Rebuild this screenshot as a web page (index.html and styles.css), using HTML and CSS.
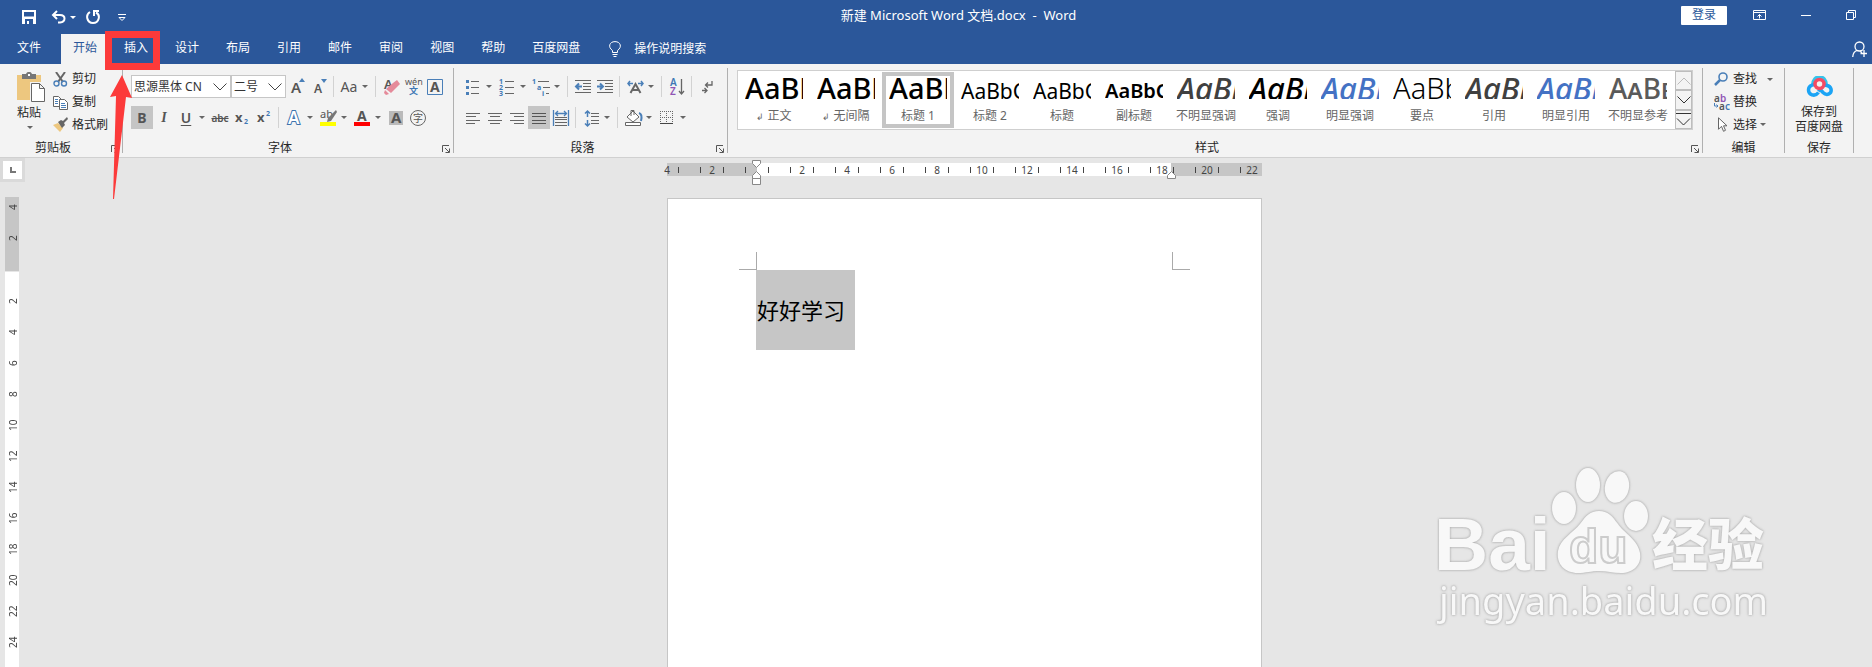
FILE: index.html
```html
<!DOCTYPE html>
<html lang="zh-CN">
    <head>
        <meta charset="utf-8">
        <title>新建 Microsoft Word 文档.docx - Word</title>
        <link rel="stylesheet" href="styles.css">
    </head>
    <body>
        <!-- Title bar -->
        <header class="titlebar">
            <div class="quick">
                <button class="quick_btn" aria-label="保存">
                    <svg width="14" height="14" viewBox="0 0 14 14"><path d="M0 0h14v14H0zM2 2v4.500h10V2zM3 9v5h8V9z" fill="#fff" fill-rule="evenodd"/><path d="M5 11h2v3H5z" fill="#fff"/></svg>
                </button>
                <button class="quick_btn undo" aria-label="撤销">
                    <svg width="15" height="14" viewBox="0 0 15 14" fill="none" stroke="#fff" stroke-width="2"><path d="M6 1L2 5l4 4M2 5h7c6 0 6 7 0 7.500H7"/></svg>
                    <i class="caret white"></i>
                </button>
                <button class="quick_btn redo" aria-label="重复">
                    <svg width="14" height="14" viewBox="0 0 14 14" fill="none" stroke="#fff" stroke-width="2"><path d="M4 2C-1 5 1 13 7 13s8-8 3-10.500M8 6V1h5"/></svg>
                </button>
                <button class="quick_btn more" aria-label="自定义快速访问工具栏">
                    <svg width="8" height="7" viewBox="0 0 8 7" fill="none" stroke="#fff"><path d="M0 .5h8M1 3.500h6L4 6.500z"/></svg>
                </button>
            </div>
            <div class="doc_title">新建 Microsoft Word 文档.docx&nbsp; - &nbsp;Word</div>
            <div class="window_tools">
                <button class="login">登录</button>
                <button class="win_btn" aria-label="功能区显示选项">
                    <svg width="13" height="10" viewBox="0 0 13 10" fill="none" stroke="#fff"><path d="M.5.5h12v9H.5zM0 2.500h13M6.500 8.500v-4M4.500 6.500l2-2 2 2"/></svg>
                </button>
                <button class="win_btn" aria-label="最小化">
                    <svg width="10" height="10" viewBox="0 0 10 10" stroke="#fff"><path d="M0 5.500h10"/></svg>
                </button>
                <button class="win_btn" aria-label="还原">
                    <svg width="10" height="10" viewBox="0 0 10 10" fill="none" stroke="#fff"><path d="M.5 2.500h7v7h-7zM2.500 2.500v-2h7v7h-2"/></svg>
                </button>
            </div>
        </header>

        <!-- Tabs -->
        <nav class="tabs">
            <button class="tab file">文件</button>
            <button class="tab active">开始</button>
            <button class="tab">插入</button>
            <button class="tab">设计</button>
            <button class="tab">布局</button>
            <button class="tab">引用</button>
            <button class="tab">邮件</button>
            <button class="tab">审阅</button>
            <button class="tab">视图</button>
            <button class="tab">帮助</button>
            <button class="tab">百度网盘</button>
            <button class="tab tell_me">
                <svg width="12" height="16" viewBox="0 0 12 16" fill="none" stroke="#fff"><path d="M3.500 11.500v-2C-1.500 6 .5.600 6 .600S13.500 6 8.500 9.500v2zM3.500 13.500h5M4.500 15.500h3"/></svg>
                操作说明搜索
            </button>
            <button class="share" aria-label="共享">
                <svg width="16" height="17" viewBox="0 0 16 17" fill="none" stroke="#fff" stroke-width="1.300"><circle cx="7.500" cy="5.500" r="4.500"/><path d="M.7 16c.3-4 2-6 4.500-6.700M8 10.500l2 1M12 9v7M8.500 12.500H15"/></svg>
            </button>
        </nav>

        <!-- Ribbon -->
        <section class="ribbon">
            <div class="group clipboard">
                <div class="group_body">
                    <button class="paste">
                        <svg width="28" height="31" viewBox="0 0 28 31"><path d="M0 3h24v25H0z" fill="#edc77f"/><path d="M5 2h4c1-3 5-3 6 0h4v5H5z" fill="#767676"/><path d="M11 2h2v2h-2z" fill="#fff"/><path d="M13 10h16v21H13z" fill="#f3f3f3"/><path d="M14.500 11.500h8l5 5v13h-13zM22.500 11.500v5h5" fill="#fff" stroke="#666"/></svg>
                        <span>粘贴</span>
                        <i class="caret"></i>
                    </button>
                    <div class="stack">
                        <button class="small_btn">
                            <svg width="15" height="15" viewBox="0 0 15 15" fill="none"><path d="M3 0l7 10M12 0L5 10" stroke="#666" stroke-width="2"/><circle cx="3.500" cy="11.500" r="2.500" stroke="#4a7fb8" stroke-width="1.400"/><circle cx="11" cy="11.500" r="2.500" stroke="#4a7fb8" stroke-width="1.400"/></svg>
                            剪切
                        </button>
                        <button class="small_btn">
                            <svg width="15" height="15" viewBox="0 0 15 15" fill="#fff" stroke="#666"><path d="M.5 1.500h5l3 3v7h-8z"/><path d="M2 4.500h3M2 6.500h3M2 8.500h3" stroke="#4a7fb8"/><path d="M6.500 4.500h5l3 3v7h-8z"/><path d="M8 8.500h4M8 10.500h5M8 12.500h5" stroke="#4a7fb8"/></svg>
                            复制
                        </button>
                        <button class="small_btn">
                            <svg width="15" height="15" viewBox="0 0 15 15"><path d="M0 8l5-2 5 5-3 4z" fill="#edc77f"/><path d="M5 5l3-2 2 1 4-4 1 2-4 4 1 2-3 3z" fill="#666"/></svg>
                            格式刷
                        </button>
                    </div>
                </div>
                <div class="group_foot"><span>剪贴板</span><button class="launcher" aria-label="剪贴板选项"><svg width="8" height="8" viewBox="0 0 8 8" fill="none" stroke="#555"><path d="M.5 7V.5H7M3 3l4 4M7.500 3.500v4h-4"/></svg></button></div>
            </div>

            <div class="group font">
                <div class="group_body rows">
                    <div class="tool_row">
                        <div class="combo family">
                            <select aria-label="字体"><option>思源黑体 CN</option></select>
                            <svg width="14" height="8" viewBox="0 0 14 8" fill="none" stroke="#444"><path d="M.5.5L7 7 13.500.5"/></svg>
                        </div>
                        <div class="combo size">
                            <select aria-label="字号"><option>二号</option></select>
                            <svg width="14" height="8" viewBox="0 0 14 8" fill="none" stroke="#444"><path d="M.5.5L7 7 13.500.5"/></svg>
                        </div>
                        <button class="tool" aria-label="增大字号"><svg width="22" height="22" viewBox="0 0 22 22"><text x="5" y="17" font-size="15" class="glyph semi">A</text><path d="M13 6l3-4 3 4z" fill="#4a7fb8"/></svg></button>
                        <button class="tool" aria-label="减小字号"><svg width="22" height="22" viewBox="0 0 22 22"><text x="6" y="17" font-size="12" class="glyph semi">A</text><path d="M13 3h6l-3 4z" fill="#4a7fb8"/></svg></button>
                        <i class="sep"></i>
                        <button class="tool" aria-label="更改大小写"><span class="aa">Aa</span></button><i class="drop"></i>
                        <i class="sep"></i>
                        <button class="tool" aria-label="清除所有格式"><svg width="22" height="22" viewBox="0 0 22 22"><text x="4" y="13" font-size="13" class="glyph semi">A</text><path d="M13 7l4-3 3 4-9 9-5-4z" fill="#e58a9a"/><path d="M5 14l4 4-3 1-2-2z" fill="#e58a9a"/></svg></button>
                        <button class="tool" aria-label="拼音指南"><svg width="22" height="22" viewBox="0 0 22 22"><text x="3" y="9" font-size="9" class="glyph plain">wén</text><text x="7" y="18" font-size="9" class="glyph blue">文</text></svg></button>
                        <button class="tool" aria-label="字符边框"><svg width="22" height="22" viewBox="0 0 22 22"><path d="M3.500 3.500h15v15h-15z" fill="none" stroke="#4a7fb8"/><text x="6" y="16" font-size="14" class="glyph">A</text></svg></button>
                    </div>
                    <div class="tool_row">
                        <button class="tool on bold" aria-label="加粗">B</button>
                        <button class="tool italic" aria-label="倾斜">I</button>
                        <button class="tool under" aria-label="下划线">U</button><i class="drop"></i>
                        <button class="tool strike" aria-label="删除线">abc</button>
                        <button class="tool" aria-label="下标"><svg width="22" height="22" viewBox="0 0 22 22"><text x="4" y="15" font-size="13" class="glyph">x</text><text x="13" y="17" font-size="7" class="glyph blue">2</text></svg></button>
                        <button class="tool" aria-label="上标"><svg width="22" height="22" viewBox="0 0 22 22"><text x="4" y="15" font-size="13" class="glyph">x</text><text x="13" y="9" font-size="7" class="glyph blue">2</text></svg></button>
                        <i class="sep"></i>
                        <button class="tool" aria-label="文本效果"><svg width="22" height="22" viewBox="0 0 22 22"><text x="5" y="17" font-size="17" fill="#fff" stroke="#3f74ae" stroke-width="2" class="outline">A</text></svg></button><i class="drop"></i>
                        <button class="tool" aria-label="突出显示"><svg width="22" height="22" viewBox="0 0 22 22"><text x="3" y="11" font-size="11" class="glyph plain">ab</text><path d="M19 3l-8 8-1 4 4-1 6-9z" fill="#777"/><path d="M3 15h16v4H3z" fill="#ff0"/></svg></button><i class="drop"></i>
                        <button class="tool" aria-label="字体颜色"><svg width="22" height="22" viewBox="0 0 22 22"><text x="6" y="14" font-size="14" class="glyph">A</text><path d="M3 15h16v4H3z" fill="#f00"/></svg></button><i class="drop"></i>
                        <button class="tool" aria-label="字符底纹"><svg width="22" height="22" viewBox="0 0 22 22"><path d="M4 4h14v14H4z" fill="#bababa"/><text x="6" y="16" font-size="15" class="glyph">A</text></svg></button>
                        <button class="tool" aria-label="带圈字符"><svg width="22" height="22" viewBox="0 0 22 22"><circle cx="11" cy="11" r="7.500" fill="none" stroke="#666"/><text x="6" y="15" font-size="10" class="glyph plain">字</text></svg></button>
                    </div>
                </div>
                <div class="group_foot"><span>字体</span><button class="launcher" aria-label="字体选项"><svg width="8" height="8" viewBox="0 0 8 8" fill="none" stroke="#555"><path d="M.5 7V.5H7M3 3l4 4M7.500 3.500v4h-4"/></svg></button></div>
            </div>

            <div class="group paragraph">
                <div class="group_body rows">
                    <div class="tool_row">
                        <button class="tool" aria-label="项目符号"><svg width="22" height="22" viewBox="0 0 22 22"><path d="M9 5.500h8M9 11.500h8M9 17.500h8" stroke="#666"/><path d="M4 4h3v3H4zM4 10h3v3H4zM4 16h3v3H4z" fill="#4a7fb8"/></svg></button><i class="drop"></i>
                        <button class="tool" aria-label="编号"><svg width="22" height="22" viewBox="0 0 22 22"><path d="M9 5.500h9M9 11.500h9M9 17.500h9" stroke="#666"/><text x="3" y="8" font-size="7" class="glyph blue">1</text><text x="3" y="14" font-size="7" class="glyph blue">2</text><text x="3" y="20" font-size="7" class="glyph blue">3</text></svg></button><i class="drop"></i>
                        <button class="tool" aria-label="多级列表"><svg width="22" height="22" viewBox="0 0 22 22"><path d="M8 5.500h11M13 11.500h7M16 17.500h3" stroke="#666"/><text x="2" y="8" font-size="7" class="glyph blue">1</text><text x="7" y="14" font-size="7" class="glyph blue">a</text><text x="12" y="20" font-size="7" class="glyph blue">i</text></svg></button><i class="drop"></i>
                        <i class="sep"></i>
                        <button class="tool" aria-label="减少缩进量"><svg width="22" height="22" viewBox="0 0 22 22" fill="none" stroke="#666"><path d="M3 4.500h16M11 7.500h8M11 10.500h8M11 13.500h8M3 16.500h16"/><path d="M10 10.500H4M7 7.500l-3 3 3 3" stroke="#4a7fb8" stroke-width="2"/></svg></button>
                        <button class="tool" aria-label="增加缩进量"><svg width="22" height="22" viewBox="0 0 22 22" fill="none" stroke="#666"><path d="M3 4.500h16M11 7.500h8M11 10.500h8M11 13.500h8M3 16.500h16"/><path d="M3 10.500h6M6 7.500l3 3-3 3" stroke="#4a7fb8" stroke-width="2"/></svg></button>
                        <i class="sep"></i>
                        <button class="tool" aria-label="中文版式"><svg width="22" height="22" viewBox="0 0 22 22" fill="none"><path d="M6.500 17L11.500 8l5 9M8 14h7" stroke="#666" stroke-width="2"/><path d="M9 7.500H4M6 5L4 7.500 6 10M14 7.500h5M17 5l2 2.500-2 2.500" stroke="#4a7fb8" stroke-width="1.500"/></svg></button><i class="drop"></i>
                        <i class="sep"></i>
                        <button class="tool" aria-label="排序"><svg width="22" height="22" viewBox="0 0 22 22"><text x="4" y="10" font-size="10" class="glyph blue semi">A</text><text x="4" y="19" font-size="10" class="glyph purple semi">Z</text><path d="M15.500 3v14M13 15l2.500 3 2.500-3" fill="none" stroke="#666" stroke-width="1.300"/></svg></button>
                        <i class="sep"></i>
                        <button class="tool" aria-label="显示编辑标记"><svg width="22" height="22" viewBox="0 0 22 22" fill="none" stroke="#666" stroke-width="1.300"><path d="M16 5v4h-6M12 6.500L9.500 9l2.500 2.500M6 14.500h5M8.500 12l2.500 2.500L8.500 17"/></svg></button>
                    </div>
                    <div class="tool_row">
                        <button class="tool" aria-label="左对齐"><svg width="22" height="22" viewBox="0 0 22 22" stroke="#666"><path d="M4 6.500h14M4 9.500h10M4 13.500h14M4 16.500h9"/></svg></button>
                        <button class="tool" aria-label="居中"><svg width="22" height="22" viewBox="0 0 22 22" stroke="#666"><path d="M4 6.500h14M6 9.500h10M4 13.500h14M6 16.500h10"/></svg></button>
                        <button class="tool" aria-label="右对齐"><svg width="22" height="22" viewBox="0 0 22 22" stroke="#666"><path d="M4 6.500h14M8 9.500h10M4 13.500h14M8 16.500h10"/></svg></button>
                        <button class="tool on" aria-label="两端对齐"><svg width="22" height="22" viewBox="0 0 22 22" stroke="#555"><path d="M4 6.500h14M4 9.500h14M4 13.500h14M4 16.500h14"/></svg></button>
                        <button class="tool" aria-label="分散对齐"><svg width="22" height="22" viewBox="0 0 22 22" fill="none" stroke="#666"><path d="M5 10.500h12M5 12.500h12M5 15.500h12M5 18.500h12"/><path d="M3.500 3v16M18.500 3v16M5 6.500h12M8 4L5.500 6.500 8 9M14 4l2.500 2.500L14 9" stroke="#4a7fb8" stroke-width="1.300"/></svg></button>
                        <i class="sep"></i>
                        <button class="tool" aria-label="行和段落间距"><svg width="22" height="22" viewBox="0 0 22 22" fill="none" stroke="#666"><path d="M11 6.500h8M11 9.500h8M11 13.500h8M11 16.500h8"/><path d="M7.500 4v6M5 6.500L7.500 4 10 6.500M7.500 13v6M5 16.500L7.500 19l2.500-2.500" stroke="#4a7fb8" stroke-width="1.500"/></svg></button><i class="drop"></i>
                        <i class="sep"></i>
                        <button class="tool" aria-label="底纹"><svg width="22" height="22" viewBox="0 0 22 22" fill="none" stroke="#666"><path d="M5 10l6-6 6 6-6 5zM9 9V3.500h3V8" fill="#fff"/><path d="M17 6c3 1 3 4 2 8" stroke="#4a7fb8" stroke-width="2"/><path d="M3.500 15.500h15v3h-15z" fill="#fff"/></svg></button><i class="drop"></i>
                        <button class="tool" aria-label="边框"><svg width="22" height="22" viewBox="0 0 22 22" fill="none" stroke="#666"><path d="M4.500 4v12M10.500 4v12M16.500 4v12M4 4.500h13M4 10.500h13" stroke-dasharray="1 1"/><path d="M4 16.500h13" stroke="#444"/></svg></button><i class="drop"></i>
                    </div>
                </div>
                <div class="group_foot"><span>段落</span><button class="launcher" aria-label="段落选项"><svg width="8" height="8" viewBox="0 0 8 8" fill="none" stroke="#555"><path d="M.5 7V.5H7M3 3l4 4M7.500 3.500v4h-4"/></svg></button></div>
            </div>

            <div class="group styles">
                <div class="group_body">
                    <div class="gallery">
                        <button class="style"><span class="sample">AaBb</span><span class="style_name"><small>↲</small> 正文</span></button>
                        <button class="style"><span class="sample">AaBb</span><span class="style_name"><small>↲</small> 无间隔</span></button>
                        <button class="style selected"><span class="sample">AaBb</span><span class="style_name">标题 1</span></button>
                        <button class="style"><span class="sample mid">AaBbC</span><span class="style_name">标题 2</span></button>
                        <button class="style"><span class="sample mid">AaBbC</span><span class="style_name">标题</span></button>
                        <button class="style"><span class="sample mid strong">AaBbC</span><span class="style_name">副标题</span></button>
                        <button class="style"><span class="sample slant dim">AaBb</span><span class="style_name">不明显强调</span></button>
                        <button class="style"><span class="sample slant">AaBb</span><span class="style_name">强调</span></button>
                        <button class="style"><span class="sample slant accent">AaBb</span><span class="style_name">明显强调</span></button>
                        <button class="style"><span class="sample thin">AaBb</span><span class="style_name">要点</span></button>
                        <button class="style"><span class="sample slant dim">AaBb</span><span class="style_name">引用</span></button>
                        <button class="style"><span class="sample slant accent">AaBb</span><span class="style_name">明显引用</span></button>
                        <button class="style"><span class="sample caps">AaBb</span><span class="style_name">不明显参考</span></button>
                        <div class="gallery_nav">
                            <button class="nav_btn" aria-label="上一行"><svg width="14" height="8" viewBox="0 0 14 8" fill="none" stroke="#bbb"><path d="M.5 7.500L7 1l6.500 6.500"/></svg></button>
                            <button class="nav_btn" aria-label="下一行"><svg width="14" height="8" viewBox="0 0 14 8" fill="none" stroke="#333"><path d="M.5.5L7 7 13.500.5"/></svg></button>
                            <button class="nav_btn" aria-label="其他"><svg width="15" height="13" viewBox="0 0 15 13" fill="none" stroke="#333"><path d="M0 .5h15M1 5.500L7.500 12 14 5.500"/></svg></button>
                        </div>
                    </div>
                </div>
                <div class="group_foot"><span>样式</span><button class="launcher" aria-label="样式选项"><svg width="8" height="8" viewBox="0 0 8 8" fill="none" stroke="#555"><path d="M.5 7V.5H7M3 3l4 4M7.500 3.500v4h-4"/></svg></button></div>
            </div>

            <div class="group editing">
                <div class="group_body">
                    <div class="stack">
                        <button class="small_btn find">
                            <svg width="16" height="15" viewBox="0 0 16 15" fill="none" stroke="#4a7fb8"><circle cx="9" cy="5" r="4" stroke-width="1.600"/><path d="M6 8l-5 5" stroke-width="2.500"/></svg>
                            查找 <i class="caret"></i>
                        </button>
                        <button class="small_btn">
                            <svg width="16" height="17" viewBox="0 0 16 17"><text x="0" y="8" font-size="10" class="glyph semi">a</text><text x="6" y="8" font-size="10" class="glyph purple semi">b</text><text x="5" y="16" font-size="10" class="glyph semi">a</text><text x="11" y="16" font-size="10" class="glyph blue semi">c</text><path d="M.5 9v3h3M2.500 10.500l1.500 1.500-1.500 1.500" fill="none" stroke="#4a7fb8"/></svg>
                            替换
                        </button>
                        <button class="small_btn select">
                            <svg width="16" height="15" viewBox="0 0 16 15"><path d="M4.500.8v11.500l3-3 2 5 2-1-2-4.500h3.500z" fill="#fff" stroke="#666"/></svg>
                            选择 <i class="caret"></i>
                        </button>
                    </div>
                </div>
                <div class="group_foot"><span>编辑</span></div>
            </div>

            <div class="group cloud">
                <div class="group_body">
                    <button class="cloud_btn">
                        <svg width="27" height="22" viewBox="0 0 27 22" fill="none"><path d="M7 9C7-1.500 20-1.500 20 9" stroke="#35c3ea" stroke-width="4"/><path d="M12.500 16.500c-4 5-10 2-10-2.500 0-5 6-7 9.500-3l5 5.500c4 4 9 1 8-3.500-1-4-7-5-9.500-1.500l-3 4" stroke="#1ba4f5" stroke-width="3.500"/><circle cx="13.500" cy="8" r="4.500" fill="#f3f3f3" stroke="#f54b63" stroke-width="3.500"/></svg>
                        <span>保存到<br>百度网盘</span>
                    </button>
                </div>
                <div class="group_foot"><span>保存</span></div>
            </div>
        </section>

        <!-- Document area -->
        <main class="workspace">
            <div class="side">
                <button class="tab_stop" aria-label="制表符"><svg width="6" height="6" viewBox="0 0 6 6"><path d="M0 0h2v4h4v2H0z" fill="#777"/></svg></button>
                <div class="vruler">
                    <div class="vmargin"><span>4</span><span>2</span></div>
                    <div class="vbody">
                        <span>2</span><span>4</span><span>6</span><span>8</span><span>10</span><span>12</span><span>14</span><span>16</span><span>18</span><span>20</span><span>22</span><span>24</span>
                    </div>
                </div>
            </div>
            <div class="canvas">
                <div class="hruler">
                    <div class="marks">
                        <span>4</span><span>2</span><span></span><span>2</span><span>4</span><span>6</span><span>8</span><span>10</span><span>12</span><span>14</span><span>16</span><span>18</span><span>20</span><span>22</span>
                    </div>
                    <svg class="indent left" width="9" height="25" viewBox="0 0 9 25" fill="#fff" stroke="#888"><path d="M.5.5h8v3l-4 4-4-4zM.5 18.500v-3l4-4 4 4v3zM.5 18.500h8v6h-8z"/></svg>
                    <svg class="indent right" width="9" height="8" viewBox="0 0 9 8" fill="#fff" stroke="#888"><path d="M.5 7.500v-3l4-4 4 4v3z"/></svg>
                </div>
                <article class="page">
                    <div class="crops"><i class="crop tl"></i><i class="crop tr"></i></div>
                    <h1 class="heading"><span>好好学习</span></h1>
                </article>
            </div>

            <svg class="watermark" width="344" height="180" viewBox="0 0 344 180" fill="#f8f8f8">
                <text x="2" y="110" class="wm_logo">Bai</text>
                <ellipse cx="132" cy="48" rx="12" ry="16"/>
                <ellipse cx="156" cy="25" rx="12" ry="17"/>
                <ellipse cx="185" cy="27" rx="12" ry="16" transform="rotate(12 185 27)"/>
                <ellipse cx="204" cy="56" rx="12" ry="15"/>
                <path d="M167 51c9 0 13 5 19 13 6 9 20 16 22 29 2 12-7 20-19 20-8 0-14-2-22-2s-13 2-21 2c-13 0-22-9-20-22 2-12 15-18 22-27 6-8 10-13 19-13z"/>
                <text x="137" y="103" class="wm_du">du</text>
                <text x="220" y="105" class="wm_cn">经验</text>
                <text x="7" y="155" class="wm_url">jingyan.baidu.com</text>
            </svg>
        </main>

        <!-- Pointer to the insert tab -->
        <svg class="callout" width="55" height="169" viewBox="0 0 55 169">
            <path d="M0 0h55v39H0zM7 7v25h41V7z" fill="#fc3a3a" fill-rule="evenodd"/>
            <path d="M17 44l10 23-6-1-12 102h-1L11 65l-6 1z" fill="#fc3a3a"/>
        </svg>
    </body>
</html>
```
FILE: styles.css
```css
*{
    box-sizing: border-box;
}
body{
    margin: 0;
    height: 100vh;
    display: flex;
    flex-direction: column;
    position: relative;
    overflow: hidden;
    background: #e6e6e6;
    color: #262626;
    font: 12px/16px "Noto Sans", "Noto Sans CJK SC", sans-serif;
}
button{
    padding: 0;
    border: 0;
    background: none;
    color: inherit;
    font: inherit;
}
svg{
    display: block;
    flex: none;
}

/* Title bar */
.titlebar{
    height: 34px;
    flex: none;
    display: flex;
    align-items: center;
    justify-content: space-between;
    padding: 0 16px 4px 22px;
    background: #2b579a;
    color: #fff;
}
.quick{
    width: 214px;
    display: flex;
    align-items: center;
    padding-top: 4px;
}
.quick_btn{
    display: flex;
    align-items: center;
    gap: 4px;
    margin-right: 15px;
}
.undo{
    margin-right: 10px;
}
.redo{
    margin-right: 18px;
}
.doc_title{
    font-size: 13px;
    white-space: nowrap;
}
.window_tools{
    display: flex;
    align-items: center;
}
.login{
    width: 46px;
    height: 19px;
    margin-right: 26px;
    background: #fff;
    color: #2b579a;
    border-radius: 1px;
}
.win_btn{
    margin-right: 35px;
}
.win_btn:last-child{
    margin-right: 0;
}
.caret{
    border: 3px solid transparent;
    border-top-color: #666;
    border-bottom: 0;
}
.white{
    border-top-color: #fff;
}

/* Tabs */
.tabs{
    height: 30px;
    flex: none;
    display: flex;
    gap: 3px;
    padding: 0 4px 0 5px;
    background: #2b579a;
    color: #fff;
}
.tab{
    padding: 0 12px 2px;
}
.file{
    margin-right: 5px;
}
.active{
    background: #f3f3f3;
    color: #2b579a;
}
.tell_me{
    display: flex;
    align-items: center;
    gap: 13px;
    margin-left: 2px;
    padding: 0 12px;
}
.share{
    margin-left: auto;
}

/* Ribbon */
.ribbon{
    height: 94px;
    flex: none;
    display: flex;
    padding: 4px 18px 4px 0;
    background: #f3f3f3;
    border-bottom: 1px solid #d0d0d0;
}
.group{
    display: flex;
    flex-direction: column;
    justify-content: space-between;
    border-right: 1px solid #b0b0b0;
}
.clipboard{
    width: 123px;
}
.font{
    width: 331px;
}
.paragraph{
    width: 274px;
}
.styles{
    flex: 1;
    min-width: 0;
}
.editing{
    width: 82px;
}
.cloud{
    width: 69px;
}
.group_body{
    display: flex;
    height: 68px;
}
.group_foot{
    display: flex;
    align-items: flex-end;
    height: 12px;
    line-height: 10px;
    padding-right: 3px;
    white-space: nowrap;
}
.group_foot span{
    flex: 1;
    text-align: center;
}
.editing .group_foot,
.cloud .group_foot{
    padding-right: 0;
}
.launcher{
    width: 13px;
    padding-left: 5px;
}
.paste{
    display: flex;
    flex-direction: column;
    align-items: flex-start;
    width: 36px;
    margin: 4px 0 0 17px;
}
.paste span{
    margin-top: 2px;
}
.paste .caret{
    margin: 5px 0 0 10px;
}
.stack{
    display: flex;
    flex-direction: column;
}
.small_btn{
    display: flex;
    align-items: center;
    gap: 4px;
    height: 23px;
    white-space: nowrap;
}
.rows{
    flex-direction: column;
    gap: 8px;
    padding: 7px 0 0 8px;
}
.tool_row{
    display: flex;
    align-items: center;
    height: 23px;
}
.combo{
    display: flex;
    align-items: center;
    position: relative;
    height: 23px;
    border: 1px solid #c6c6c6;
    background: #fff;
}
.combo select{
    width: 100%;
    padding: 0 2px;
    border: 0;
    background: none;
    color: #333;
    font: inherit;
    appearance: none;
}
.combo svg{
    position: absolute;
    right: 3px;
    pointer-events: none;
}
.family{
    width: 100px;
}
.size{
    width: 55px;
}
.tool{
    display: flex;
    align-items: center;
    justify-content: center;
    width: 22px;
    height: 23px;
    flex: none;
    color: #555;
    font-size: 14px;
}
.on{
    background: #c5c5c5;
}
.drop{
    width: 12px;
    flex: none;
}
.drop::before{
    content: "";
    display: block;
    width: 0;
    margin-left: 2px;
    border: 3px solid transparent;
    border-top-color: #666;
    border-bottom: 0;
}
.sep{
    width: 8px;
    height: 21px;
    flex: none;
    border-left: 1px solid #d2d2d2;
    margin-left: 3px;
    margin-right: -3px;
}
.bold{
    font-weight: bold;
}
.italic{
    font-family: "Liberation Serif", serif;
    font-style: italic;
    font-weight: bold;
}
.under{
    font-weight: 600;
    text-decoration: underline;
    text-underline-offset: 2px;
}
.strike{
    font-size: 10px;
    font-weight: 600;
    text-decoration: line-through;
}
.glyph{
    fill: #555;
    font-weight: bold;
}
.plain{
    font-weight: normal;
}
.semi{
    font-weight: 600;
}
.blue{
    fill: #3f78b5;
}
.purple{
    fill: #9055b5;
}
.outline{
    paint-order: stroke;
    font-weight: 600;
}

/* Style gallery */
.gallery{
    display: flex;
    flex: 1;
    height: 60px;
    margin: 2px 9px 0;
    border: 1px solid #cfcfcf;
    background: #fff;
}
.style{
    display: flex;
    flex-direction: column;
    width: 72px;
    height: 56px;
    flex: none;
    margin-top: 1px;
    padding: 6px 0 0;
    color: #000;
}
.selected{
    box-shadow: inset 0 0 0 4px #c5c5c5;
}
.sample{
    width: 58px;
    height: 21px;
    margin-left: 7px;
    overflow: hidden;
    font-size: 29px;
    font-weight: 500;
    line-height: 20px;
    text-align: left;
}
.mid{
    padding-top: 3px;
    font-size: 21px;
    font-weight: normal;
}
.strong{
    font-size: 20px;
    font-weight: 600;
}
.slant{
    font-style: italic;
    font-size: 31px;
}
.dim{
    color: #404040;
}
.accent{
    color: #4472c4;
}
.thin{
    font-weight: 300;
}
.caps{
    color: #5a5a5a;
    font-size: 28px;
    font-variant: small-caps;
}
.style_name{
    width: 72px;
    margin-top: 9px;
    color: #666;
    text-align: center;
    white-space: nowrap;
}
.style_name small{
    font-size: 9px;
}
.gallery_nav{
    display: flex;
    flex-direction: column;
    width: 17px;
    margin-left: auto;
}
.nav_btn{
    display: flex;
    align-items: center;
    justify-content: center;
    flex: 1;
    border: 1px solid #bdbdbd;
    background: #f3f3f3;
}
.editing .stack{
    padding-left: 11px;
}
.editing .small_btn{
    gap: 3px;
}
.find .caret{
    margin-left: 7px;
}
.cloud_btn{
    width: 100%;
    padding-top: 6px;
    line-height: 15px;
}
.cloud_btn svg{
    margin: 0 auto 6px;
}

/* Document area */
.workspace{
    display: flex;
    flex: 1;
    min-height: 0;
    position: relative;
}
.side{
    width: 25px;
    flex: none;
    display: flex;
    flex-direction: column;
    gap: 15px;
}
.tab_stop{
    height: 24px;
    flex: none;
    display: flex;
    align-items: center;
    justify-content: center;
    border: 3px solid #dadada;
    background: #fff;
}
.vruler{
    flex: 1;
    width: 14px;
    margin-left: 5px;
    overflow: hidden;
    background: #fff;
    color: #444;
    font-size: 10px;
}
.vmargin{
    height: 106px;
    margin-top: -31px;
    padding-top: 26px;
    background: #c6c6c6;
    border-bottom: 1px solid #e6e6e6;
}
.vbody{
    padding-top: 14px;
}
.vruler span{
    display: block;
    width: 16px;
    height: 31px;
    line-height: 16px;
    writing-mode: vertical-rl;
    transform: rotate(180deg);
    text-align: center;
}
.canvas{
    flex: 1;
    display: flex;
    flex-direction: column;
    align-items: center;
    padding: 5px 0 0 32px;
}
.hruler{
    position: relative;
    width: 595px;
    height: 13px;
    flex: none;
    background: linear-gradient(to right, #c6c6c6 90px, #fff 90px, #fff 504px, #c6c6c6 504px);
}
.marks{
    display: flex;
    margin-left: -22px;
    color: #444;
    font-size: 10px;
    line-height: 14px;
}
.marks span{
    display: flex;
    align-items: center;
    justify-content: space-between;
    width: 45px;
    height: 14px;
    flex: none;
    padding: 0 11px 0 10px;
}
.marks span::before,
.marks span::after{
    content: "";
    width: 1px;
    height: 6px;
    background: #444;
}
.marks span:first-child::before,
.marks span:last-child::after{
    background: none;
}
.indent{
    position: absolute;
}
.left{
    left: 85px;
    top: -3px;
}
.right{
    left: 500px;
    top: 8px;
}
.page{
    width: 595px;
    flex: 1;
    margin-top: 22px;
    padding: 53px 88px 0;
    border: 1px solid #c6c6c6;
    border-bottom: 0;
    background: #fff;
}
.crops{
    display: flex;
    justify-content: space-between;
    margin: 0 -17px;
}
.crop{
    width: 18px;
    height: 18px;
    border-bottom: 1px solid #aaa;
}
.tl{
    border-right: 1px solid #aaa;
}
.tr{
    border-left: 1px solid #aaa;
}
.heading{
    margin: 0;
    font-family: "Noto Sans CJK SC", sans-serif;
    font-size: 22px;
    font-weight: normal;
    line-height: 78px;
    color: #000;
}
.heading span{
    display: inline-block;
    padding: 0 10px 2px 1px;
    background: #c6c6c6;
}

/* Watermark */
.watermark{
    position: absolute;
    right: 96px;
    top: 302px;
    overflow: visible;
    filter: drop-shadow(0 0 1px #aaa) drop-shadow(0 0 1px #ccc);
}
.wm_logo{
    font: bold 75px "Liberation Sans", sans-serif;
}
.wm_du{
    font: bold 48px "Liberation Sans", sans-serif;
    stroke: #ccc;
    stroke-width: 2px;
}
.wm_cn{
    font: 900 56px "Noto Sans CJK SC", sans-serif;
}
.wm_url{
    font: 38px "Noto Sans", sans-serif;
}
.callout{
    position: absolute;
    left: 105px;
    top: 31px;
    pointer-events: none;
}
```
